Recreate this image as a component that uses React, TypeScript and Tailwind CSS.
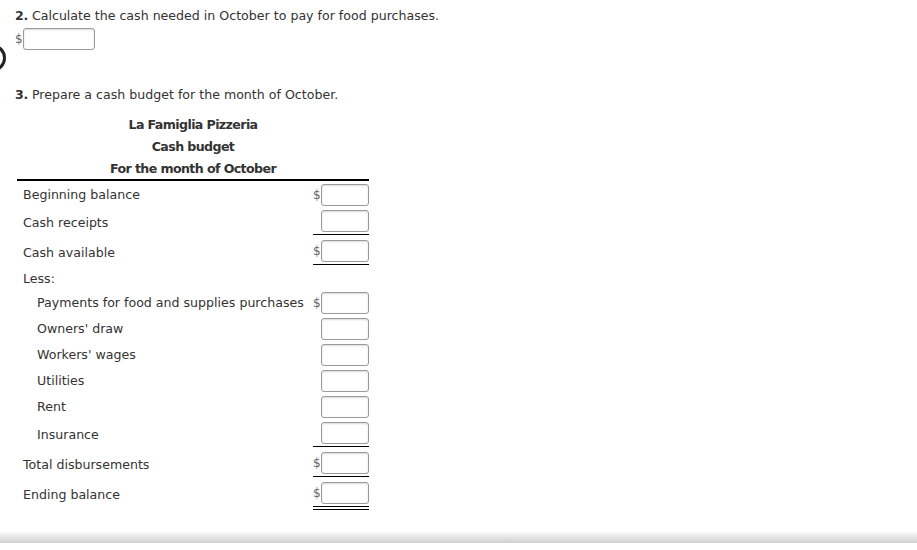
import React from "react";

type Row = {
  label: string;
  indent?: boolean;
  dollar?: boolean;
  line?: "single" | "double";
  noInput?: boolean;
};

const rows: Row[] = [
  { label: "Beginning balance", dollar: true },
  { label: "Cash receipts", line: "single" },
  { label: "Cash available", dollar: true, line: "single" },
  { label: "Less:", noInput: true },
  { label: "Payments for food and supplies purchases", indent: true, dollar: true },
  { label: "Owners' draw", indent: true },
  { label: "Workers' wages", indent: true },
  { label: "Utilities", indent: true },
  { label: "Rent", indent: true },
  { label: "Insurance", indent: true, line: "single" },
  { label: "Total disbursements", dollar: true, line: "single" },
  { label: "Ending balance", dollar: true, line: "double" },
];

const Box = ({ w }: { w: string }) => (
  <div
    className={`${w} h-[22px] rounded-[3px] border border-[#9a9a9a] bg-white shadow-[inset_0_1px_2px_rgba(0,0,0,0.15)]`}
  />
);

const App = () => {
  return (
    <div
      className="relative w-[917px] h-[550px] bg-white overflow-hidden text-[#333] text-[12.6px]"
      style={{ fontFamily: '"DejaVu Sans", Verdana, sans-serif' }}
    >
      <div className="absolute left-[-22px] top-[44px] w-[28px] h-[28px] rounded-full border-[3px] border-[#222]" />

      <div className="pl-[15px] pt-[6px]">
        <p className="leading-[20px]">
          <b className="tracking-[-0.3px]">2.</b> Calculate the cash needed in October to pay for food purchases.
        </p>
        <div className="flex items-center mt-[2px]">
          <span className="text-[12px] w-[8px] text-[#666]">$</span>
          <Box w="w-[72px]" />
        </div>

        <p className="leading-[20px] mt-[35px]">
          <b className="tracking-[-0.3px]">3.</b> Prepare a cash budget for the month of October.
        </p>

        <div className="w-[352px] ml-[2px] mt-[9px]">
          <div className="text-center font-bold tracking-[-0.6px]">
            <div className="leading-[22px]">La Famiglia Pizzeria</div>
            <div className="leading-[22px]">Cash budget</div>
            <div className="leading-[21px] border-b-2 border-black">For the month of October</div>
          </div>

          <div className="pt-[1px]">
            {rows.map((r) => (
              <div key={r.label} className="flex items-stretch">
                <div
                  className={`flex-1 flex items-center ${r.indent ? "pl-[20px]" : "pl-[6px]"}`}
                >
                  {r.label}
                </div>
                {r.noInput ? (
                  <div className="h-[22px]" />
                ) : (
                  <div
                    className={`w-[56px] flex items-center py-[2px] ${
                      r.line === "single"
                        ? "border-b border-black mb-[3px]"
                        : r.line === "double"
                        ? "border-b-[4px] border-double border-black"
                        : ""
                    }`}
                  >
                    <span className="w-[8px] text-[12px] text-[#666]">{r.dollar ? "$" : ""}</span>
                    <Box w="w-[48px]" />
                  </div>
                )}
              </div>
            ))}
          </div>
        </div>
      </div>

      <div className="absolute left-0 right-0 top-[531px] h-[12px] bg-gradient-to-b from-white via-[#e6e6e6] to-[#cfcfcf]" />
      <div className="absolute left-0 right-0 top-[543px] h-[7px] bg-white" />
    </div>
  );
};

export default App;
